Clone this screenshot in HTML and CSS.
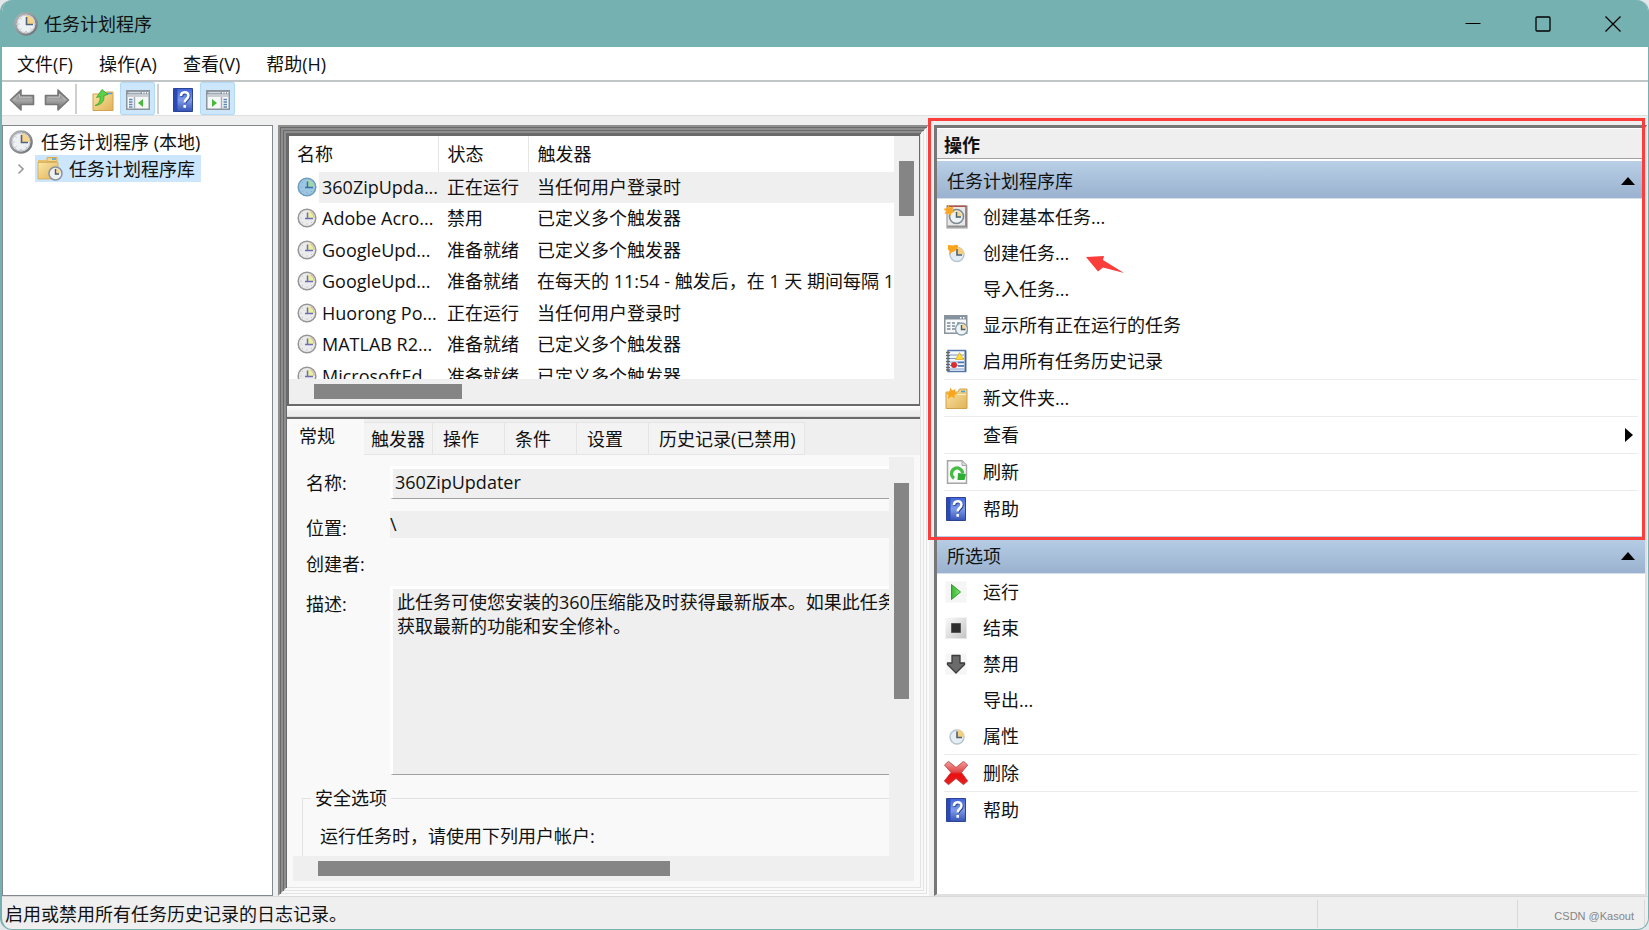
FILE: index.html
```html
<!DOCTYPE html>
<html lang="zh-CN">
<head>
<meta charset="utf-8">
<title>任务计划程序</title>
<link rel="stylesheet" href="styles.css">
</head>
<body>
<svg class="sprite" aria-hidden="true">
  <defs>
    <linearGradient id="g-ring" x1="0" y1="0" x2="1" y2="1"><stop offset="0" stop-color="#b5b7ba"/><stop offset="1" stop-color="#6d7074"/></linearGradient>
    <linearGradient id="g-folder" x1="0" y1="0" x2="1" y2="1"><stop offset="0" stop-color="#fbe6a6"/><stop offset="1" stop-color="#e0b257"/></linearGradient>
    <linearGradient id="g-book" x1="0" y1="0" x2="0" y2="1"><stop offset="0" stop-color="#3f63d8"/><stop offset=".5" stop-color="#7f9be8"/><stop offset="1" stop-color="#3553b4"/></linearGradient>
    <linearGradient id="g-arrow" x1="0" y1="0" x2="0" y2="1"><stop offset="0" stop-color="#6f6f6f"/><stop offset=".5" stop-color="#a8a8a8"/><stop offset="1" stop-color="#6a6a6a"/></linearGradient>
    <linearGradient id="g-red" x1="0" y1="0" x2="0" y2="1"><stop offset="0" stop-color="#f0a0a0"/><stop offset=".45" stop-color="#e04848"/><stop offset=".55" stop-color="#ea0f0f"/><stop offset="1" stop-color="#e62222"/></linearGradient>
    <linearGradient id="g-stop" x1="0" y1="0" x2="1" y2="1"><stop offset="0" stop-color="#fafafa"/><stop offset="1" stop-color="#c4c4c4"/></linearGradient>
    <linearGradient id="g-play" x1="0" y1="0" x2="1" y2="0"><stop offset="0" stop-color="#35b52c"/><stop offset="1" stop-color="#8be27c"/></linearGradient>
  </defs>
  <symbol id="clock" viewBox="0 0 24 24">
    <circle cx="12" cy="12" r="10.6" fill="#e9ecef" stroke="url(#g-ring)" stroke-width="2.4"/>
    <circle cx="12" cy="12" r="8.8" fill="#eef1f4" stroke="#c6cacf" stroke-width="1"/>
    <path d="M12 12V3.6A8.4 8.4 0 0 1 20.4 12Z" fill="#f8d48a"/>
    <path d="M12.5 5v7.5H19" fill="none" stroke="#50637c" stroke-width="1.6"/>
    <path d="M4.5 12h1M12 19v1M6.6 6.6l.7.7M6.6 17.4l.7-.7M17.4 17.4l-.7-.7" stroke="#9ba3ad" stroke-width="1"/>
  </symbol>
  <symbol id="clock-small" viewBox="0 0 20 20">
    <circle cx="10" cy="10" r="8.8" fill="#ebebee" stroke="#959595" stroke-width="1.5"/>
    <path d="M10 10V3a7 7 0 0 1 7 7Z" fill="#e5f2a2"/>
    <path d="M13.5 3.8A7 7 0 0 1 17 10" fill="none" stroke="#e8b9a2" stroke-width="1.3"/>
    <path d="M10.5 4.5v6H16M8 10.5h2" fill="none" stroke="#6f6cb0" stroke-width="1.5"/>
    <path d="M3.5 10h1M10 15.5v1M5.3 5.3l.7.7M5.3 14.7l.7-.7M14.7 14.7l-.7-.7" stroke="#b3b3bd"/>
  </symbol>
  <symbol id="clock-active" viewBox="0 0 20 20">
    <circle cx="10" cy="10" r="8.8" fill="#9dc6e2" stroke="#6f9dbd" stroke-width="1.5"/>
    <path d="M10 10V3a7 7 0 0 1 7 7Z" fill="#a0d9a8"/>
    <path d="M10.5 4.5v6H16M8 10.5h2" fill="none" stroke="#356fa5" stroke-width="1.5"/>
    <path d="M3.5 10h1M10 15.5v1M5.3 5.3l.7.7M5.3 14.7l.7-.7M14.7 14.7l-.7-.7" stroke="#6fa3c6"/>
  </symbol>
  <symbol id="clock-flat" viewBox="0 0 24 24">
    <circle cx="13" cy="13" r="7" fill="#e6eef3" stroke="#b3c4cf" stroke-width="1.4"/>
    <path d="M13 13V5.5a7.5 7.5 0 0 1 7.5 7.5Z" fill="#f3cf82"/>
    <path d="M13 7.5V13.5h5" fill="none" stroke="#4f6070" stroke-width="1.6"/>
  </symbol>
  <symbol id="folder-clock" viewBox="0 0 26 26">
    <path d="M1 4h8l2 3V22H1Z" fill="#e8be67"/>
    <path d="M10 1.500h10v4H10z" fill="#f3d58c" stroke="#d9ad56"/><path d="M15 3h4" stroke="#4aa0e8" stroke-width="1.6"/>
    <path d="M1 6.500h20V23H1Z" fill="url(#g-folder)" stroke="#d6a951" stroke-width=".8"/>
    <circle cx="18.500" cy="17.500" r="6.500" fill="#eef1f3" stroke="#8b949c" stroke-width="1.500"/>
    <path d="M18.500 17.500v-5a5 5 0 0 1 5 5Z" fill="#f6d68f"/>
    <path d="M18.500 13v5H22" fill="none" stroke="#46586a" stroke-width="1.400"/>
  </symbol>
  <symbol id="folder-up" viewBox="0 0 24 24">
    <path d="M2 6h11l1.500-2H22V22.500H2Z" fill="url(#g-folder)" stroke="#cfa24b"/>
    <path d="M16 5.500h5" stroke="#4aa0e8" stroke-width="1.600"/>
    <path d="M4 17.500C8.500 16 9.500 12.500 9 8.500L5.500 9.500 11 1.500 17 6.500 13 7.500C13.500 13 10.500 17 4 17.500Z" fill="#5bd04a" stroke="#33a528" stroke-width=".8"/>
  </symbol>
  <symbol id="folder-new" viewBox="0 0 24 24">
    <path d="M2 6h12l1.500-3H23v19.500H2Z" fill="url(#g-folder)" stroke="#cfa24b"/>
    <path d="M3 8.500h19" stroke="#fdf0c4"/><path d="M17 5.500h4" stroke="#4aa0e8" stroke-width="1.600"/>
    <path d="M6.500 1.500l1.500 3 3.500-1.500-.5 3.500 3 1.500-3.500 1 0 3.500-3-2-3.500 2.500.5-4-3-1.500 3.500-1Z" fill="#fba51c"/>
  </symbol>
  <symbol id="panel-left" viewBox="0 0 24 20">
    <path d="M.75.75h22.500v18.500H.75z" fill="#f6f7f8" stroke="#8c949b" stroke-width="1.500"/>
    <path d="M1 1h22v3.500H1z" fill="#909ba5"/><path d="M2.500 2.700h12" stroke="#e5e9ec"/><path d="M16 2.700h1.500M18.500 2.700H20M21 2.700h1.500" stroke="#fff" stroke-width="1.500"/>
    <path d="M1.500 6h21" stroke="#b9c0c6" stroke-width="1.500"/><path d="M8.500 7v12" stroke="#a5adb4" stroke-width="1.400"/>
    <path d="M3 9.500h3.500M3 12h3.500M3 14.500h3.500M3 17h3.500" stroke="#5c86b5" stroke-width="1.300"/>
    <path d="M17 9v8l-5-4Z" fill="#48b93b"/>
  </symbol>
  <symbol id="panel-right" viewBox="0 0 24 20">
    <path d="M.75.75h22.500v18.500H.75z" fill="#f6f7f8" stroke="#8c949b" stroke-width="1.500"/>
    <path d="M1 1h22v3.500H1z" fill="#909ba5"/><path d="M2.500 2.700h12" stroke="#e5e9ec"/><path d="M16 2.700h1.500M18.500 2.700H20M21 2.700h1.500" stroke="#fff" stroke-width="1.500"/>
    <path d="M1.500 6h21" stroke="#b9c0c6" stroke-width="1.500"/><path d="M15.500 7v12" stroke="#a5adb4" stroke-width="1.400"/>
    <path d="M17.500 9.500H21M17.500 12H21M17.500 14.500H21M17.500 17H21" stroke="#5c86b5" stroke-width="1.300"/>
    <path d="M6 9v8l5-4Z" fill="#48b93b"/>
  </symbol>
  <symbol id="help" viewBox="0 0 20 24">
    <path d="M.5.5h19v23H.5z" fill="url(#g-book)" stroke="#2c4493"/>
    <path d="M1 1h3.500v22H1z" fill="#2a49b4"/>
    <path d="M8 8c0-5 7.500-5 7.500-.5 0 3.500-3.800 3.500-3.800 7" fill="none" stroke="#26418f" stroke-width="2.600" transform="translate(.8 .8)"/>
    <path d="M8 8c0-5 7.500-5 7.500-.5 0 3.500-3.800 3.500-3.800 7M11.700 17v2.800" fill="none" stroke="#fff" stroke-width="2.500"/>
  </symbol>
  <symbol id="back" viewBox="0 0 26 24">
    <path d="M1.500 12L12 2v5.500H24.500v9H12V22Z" fill="url(#g-arrow)" stroke="#777" stroke-width="1.600" stroke-linejoin="round"/>
    <path d="M4.500 12L10.500 6v3.200h12" fill="none" stroke="#c4c4c4"/>
  </symbol>
  <symbol id="task-basic" viewBox="0 0 24 24">
    <path d="M3 1h20v22H3z" fill="#e8e8e8" stroke="#9a9a9a" stroke-width="1.200"/>
    <path d="M3 .500h19.500v1.500H3z" fill="#ad5148"/><path d="M22 2v20" stroke="#8a7370" stroke-width="1.600"/>
    <path d="M3.500 21.500h18" stroke="#8f8f8f" stroke-width="2"/>
    <circle cx="12.500" cy="11.500" r="7" fill="#f0f3f5" stroke="#7d8990" stroke-width="1.600"/>
    <path d="M12.500 11.500V6a5.500 5.500 0 0 1 5.500 5.500Z" fill="#f4d792"/>
    <path d="M12.500 7v5H17" fill="none" stroke="#47606e" stroke-width="1.500"/>
    <path d="M4.500 0l1.500 2.500 3.500-1L8.500 5 11 7 7.500 8 6.500 11 4 8.500.5 9 2 6-.5 4 3 3Z" fill="#f9a72a"/>
  </symbol>
  <symbol id="task-new" viewBox="0 0 24 24">
    <circle cx="13" cy="13.500" r="7" fill="#e3ecf2" stroke="#b3c4cf" stroke-width="1.400"/>
    <path d="M13 13V6a7.500 7.500 0 0 1 7.500 7.500Z" fill="#f3cf82"/>
    <path d="M13 8v6h5" fill="none" stroke="#4f6070" stroke-width="1.600"/>
    <path d="M4 4l5 .5 3-.8 2.500 1-1.500 2.800-2 2.500-3.500 1.500L5 14l.5-4L4 8.500Z" fill="#faa41c"/>
  </symbol>
  <symbol id="task-running" viewBox="0 0 24 24">
    <path d="M.75 2.750h22v17.500h-22z" fill="#f7f8f9" stroke="#8c949b" stroke-width="1.500"/>
    <path d="M1 3h21.500v3.500H1z" fill="#8792a0"/><path d="M16 4.700h1.500M19 4.700h1.500" stroke="#fff" stroke-width="1.500"/>
    <path d="M3 10h3.500M8 10h3M13 10h3M3 13h3.500M8 13h3M3 16h3.500M8 16h3" stroke="#7d8a97" stroke-width="1.400"/>
    <circle cx="17.500" cy="16" r="6" fill="#eef3f6" stroke="#8ba0ad" stroke-width="1.400"/>
    <path d="M17.500 16v-5a5 5 0 0 1 5 5Z" fill="#f4d792"/>
    <path d="M17.500 12v4.500h4" fill="none" stroke="#47606e" stroke-width="1.400"/>
  </symbol>
  <symbol id="history" viewBox="0 0 24 24">
    <path d="M4 1.500h17.500v21H4z" fill="#f4f7fb" stroke="#5578ae" stroke-width="1.500"/><path d="M21.500 2v20.500" stroke="#4a6494" stroke-width="1.600"/>
    <path d="M6 6h14M6 9.500h14M6 13h14M6 16.500h14M6 20h14" stroke="#7e9cc9"/>
    <path d="M2 3.500h4M2 6.500h4M2 9.500h4M2 12.500h4M2 15.500h4M2 18.500h4M2 21h4" stroke="#666" stroke-width="1.300"/>
    <path d="M15.500 3.500l4 7h-8Z" fill="#ffd83a" stroke="#d9a910" stroke-width=".7"/>
    <circle cx="10" cy="16" r="3" fill="#db2b2b"/><path d="M14 13.500h6M14 17h6" stroke="#4c74b0" stroke-width="1.300"/>
  </symbol>
  <symbol id="refresh" viewBox="0 0 24 24">
    <path d="M3.500.75H18l4.500 4.500v18h-19z" fill="#fafafa" stroke="#a6a6a6" stroke-width="1.500"/><path d="M18 1v4.500h4.500" fill="#ddd" stroke="#a6a6a6"/>
    <path d="M10 18.300A5.600 5.600 0 1 1 18.700 13.500" fill="none" stroke="#45bd45" stroke-width="3.200"/>
    <path d="M14 13L22 14 20.500 20H13.500Z" fill="#2fae36"/>
  </symbol>
  <symbol id="run" viewBox="0 0 24 24"><path d="M1.500 1.500h21v21h-21z" fill="#f5f5f5"/><path d="M7.500 4.500L16.500 12 7.500 19.500Z" fill="url(#g-play)" stroke="#2ba024" stroke-linejoin="round"/></symbol>
  <symbol id="stop" viewBox="0 0 24 24"><path d="M1.500 1.500h21v21h-21z" fill="url(#g-stop)"/><path d="M7.500 7.500h9v9h-9z" fill="#2d2d2d" stroke="#555"/></symbol>
  <symbol id="disable" viewBox="0 0 24 24"><path d="M1.500 1.500h21v21h-21z" fill="#f5f5f5"/><path d="M8 3.500h8V11h4.500v1.500L12 21 3.500 12.500V11H8Z" fill="#6b6b6b" stroke="#3b3b3b" stroke-width="1.300" stroke-linejoin="round"/></symbol>
  <symbol id="delete" viewBox="0 0 24 24">
    <path d="M.5 4L4.500.3 12 6.500 19.500.3 23.700 4 17.500 11.500 23.700 20 19.500 23.700 12 17.500 4.500 23.700.3 20 7 11.500Z" fill="url(#g-red)" stroke="#b83a3a" stroke-width=".8" stroke-linejoin="round"/>
  </symbol>
</svg>

<div class="window">
  <header class="titlebar">
    <svg class="icon-24"><use href="#clock"/></svg>
    <h1>任务计划程序</h1>
    <div class="window-controls">
      <button type="button" aria-label="最小化"><svg viewBox="0 0 16 16"><path d="M.5 7.500h15" stroke="#000"/></svg></button>
      <button type="button" aria-label="最大化"><svg viewBox="0 0 16 16"><rect x="1" y="1" width="14" height="14" rx="1" fill="none" stroke="#000" stroke-width="1.300"/></svg></button>
      <button type="button" aria-label="关闭"><svg viewBox="0 0 16 16"><path d="M.5.5l15 15M15.500.5l-15 15" stroke="#000" stroke-width="1.300"/></svg></button>
    </div>
  </header>

  <nav class="menubar">
    <button type="button">文件(F)</button>
    <button type="button">操作(A)</button>
    <button type="button">查看(V)</button>
    <button type="button">帮助(H)</button>
  </nav>

  <div class="toolbar">
    <button type="button" aria-label="后退"><svg class="arrow-icon"><use href="#back"/></svg></button>
    <button type="button" aria-label="前进"><svg class="arrow-icon flip"><use href="#back"/></svg></button>
    <span class="divider wide"></span>
    <button type="button" aria-label="上一级"><svg class="icon-24"><use href="#folder-up"/></svg></button>
    <button type="button" class="pressed" aria-label="显示控制台树"><svg class="panel-icon"><use href="#panel-left"/></svg></button>
    <span class="divider"></span>
    <button type="button" aria-label="帮助"><svg class="book-icon"><use href="#help"/></svg></button>
    <button type="button" class="pressed" aria-label="显示操作窗格"><svg class="panel-icon"><use href="#panel-right"/></svg></button>
  </div>

  <main class="body">
    <aside class="tree">
      <div class="tree-root"><svg class="icon-24"><use href="#clock"/></svg><span>任务计划程序 (本地)</span></div>
      <div class="tree-child">
        <button type="button" class="expander" aria-label="展开"><svg viewBox="0 0 8 12"><path d="M1.500 1.500L6 6l-4.500 4.500" fill="none" stroke="#999" stroke-width="1.600"/></svg></button>
        <button type="button" class="tree-node"><svg class="icon-26"><use href="#folder-clock"/></svg>任务计划程序库</button>
      </div>
    </aside>

    <div class="bevel"><div class="bevel"><div class="bevel center">
      <section class="list-pane">
        <div class="list-view">
          <table>
            <colgroup><col class="c-icon"><col class="c-name"><col class="c-state"><col></colgroup>
            <thead><tr><th colspan="2" scope="col">名称</th><th scope="col">状态</th><th scope="col">触发器</th></tr></thead>
            <tbody>
              <tr class="selected"><td><svg class="icon-20"><use href="#clock-active"/></svg></td><td>360ZipUpda...</td><td>正在运行</td><td>当任何用户登录时</td></tr>
              <tr><td><svg class="icon-20"><use href="#clock-small"/></svg></td><td>Adobe Acro...</td><td>禁用</td><td>已定义多个触发器</td></tr>
              <tr><td><svg class="icon-20"><use href="#clock-small"/></svg></td><td>GoogleUpd...</td><td>准备就绪</td><td>已定义多个触发器</td></tr>
              <tr><td><svg class="icon-20"><use href="#clock-small"/></svg></td><td>GoogleUpd...</td><td>准备就绪</td><td>在每天的 11:54 - 触发后，在 1 天 期间每隔 1</td></tr>
              <tr><td><svg class="icon-20"><use href="#clock-small"/></svg></td><td>Huorong Po...</td><td>正在运行</td><td>当任何用户登录时</td></tr>
              <tr><td><svg class="icon-20"><use href="#clock-small"/></svg></td><td>MATLAB R2...</td><td>准备就绪</td><td>已定义多个触发器</td></tr>
              <tr><td><svg class="icon-20"><use href="#clock-small"/></svg></td><td>MicrosoftEd...</td><td>准备就绪</td><td>已定义多个触发器</td></tr>
            </tbody>
          </table>
        </div>
        <div class="scroll-v list-v"><div class="thumb"></div></div>
        <div class="scroll-h list-h"><div class="thumb"></div></div>
      </section>

      <div class="splitter"></div>

      <section class="details">
        <div class="tabs" role="tablist">
          <button type="button" role="tab" aria-selected="true" class="active">常规</button>
          <button type="button" role="tab" class="tab-wide">触发器</button>
          <button type="button" role="tab">操作</button>
          <button type="button" role="tab">条件</button>
          <button type="button" role="tab">设置</button>
          <button type="button" role="tab" class="tab-last">历史记录(已禁用)</button>
        </div>
        <div class="page">
          <form class="viewport">
            <div class="fields">
              <label for="f-name">名称:</label>
              <input id="f-name" class="boxed" type="text" value="360ZipUpdater" readonly>
              <label for="f-loc" class="low">位置:</label>
              <input id="f-loc" type="text" value="\" readonly>
              <span class="low">创建者:</span>
              <span></span>
              <label for="f-desc" class="high">描述:</label>
              <textarea id="f-desc" class="boxed" wrap="off" readonly>此任务可使您安装的360压缩能及时获得最新版本。如果此任务
获取最新的功能和安全修补。</textarea>
            </div>
            <fieldset>
              <legend>安全选项</legend>
              <p>运行任务时，请使用下列用户帐户:</p>
            </fieldset>
          </form>
          <div class="scroll-v page-v"><div class="thumb"></div></div>
          <div class="scroll-h page-h"><div class="thumb"></div></div>
        </div>
      </section>
    </div></div></div>

    <aside class="actions">
      <div class="marked">
        <h2>操作</h2>
        <button type="button" class="group">任务计划程序库<svg viewBox="0 0 14 8"><path d="M7 0l7 8H0Z"/></svg></button>
        <ul>
          <li><button type="button"><svg class="icon-24"><use href="#task-basic"/></svg>创建基本任务...</button></li>
          <li><button type="button"><svg class="icon-24"><use href="#task-new"/></svg>创建任务...<svg class="pointer" viewBox="0 0 38 18"><path d="M0 1L18 0 17 4 38 17 17 11.500 12 15.500Z" fill="#fb3e3c"/></svg></button></li>
          <li><button type="button"><span class="icon-24"></span>导入任务...</button></li>
          <li><button type="button"><svg class="icon-24"><use href="#task-running"/></svg>显示所有正在运行的任务</button></li>
          <li><button type="button"><svg class="icon-24"><use href="#history"/></svg>启用所有任务历史记录</button></li>
          <li class="ruled"><button type="button"><svg class="icon-24"><use href="#folder-new"/></svg>新文件夹...</button></li>
          <li class="ruled"><button type="button"><span class="icon-24"></span>查看<svg class="submenu" viewBox="0 0 8 14"><path d="M0 0l8 7-8 7Z"/></svg></button></li>
          <li class="ruled"><button type="button"><svg class="icon-24"><use href="#refresh"/></svg>刷新</button></li>
          <li class="ruled"><button type="button"><svg class="icon-24"><use href="#help"/></svg>帮助</button></li>
        </ul>
      </div>
      <button type="button" class="group">所选项<svg viewBox="0 0 14 8"><path d="M7 0l7 8H0Z"/></svg></button>
      <ul>
        <li><button type="button"><svg class="icon-24"><use href="#run"/></svg>运行</button></li>
        <li><button type="button"><svg class="icon-24"><use href="#stop"/></svg>结束</button></li>
        <li><button type="button"><svg class="icon-24"><use href="#disable"/></svg>禁用</button></li>
        <li><button type="button"><span class="icon-24"></span>导出...</button></li>
        <li><button type="button"><svg class="icon-24"><use href="#clock-flat"/></svg>属性</button></li>
        <li class="ruled"><button type="button"><svg class="icon-24"><use href="#delete"/></svg>删除</button></li>
        <li class="ruled"><button type="button"><svg class="icon-24"><use href="#help"/></svg>帮助</button></li>
      </ul>
    </aside>
  </main>

  <footer class="statusbar">
    <span class="message">启用或禁用所有任务历史记录的日志记录。</span>
    <span class="cell"></span>
    <span class="cell credit">CSDN @Kasout</span>
  </footer>
</div>
</body>
</html>
```
FILE: styles.css
```css
* { box-sizing: border-box; }

html, body { height: 100%; margin: 0; }

body {
  background: #e4e7e9;
  color: #111;
  font: 18px/24px "Open Sans", "Noto Sans CJK SC", sans-serif;
}

button, input, textarea {
  margin: 0;
  padding: 0;
  border: 0;
  background: none;
  color: inherit;
  font: inherit;
  text-align: left;
}

svg { display: block; flex: none; }
.sprite { position: absolute; width: 0; height: 0; }
.icon-20 { width: 20px; height: 20px; }
.icon-24 { width: 24px; height: 24px; flex: none; }
.icon-26 { width: 26px; height: 26px; }

.window {
  display: flex;
  flex-direction: column;
  height: 100vh;
  overflow: hidden;
  border: solid #76b1b1;
  border-width: 0 1px 1px 2px;
  border-radius: 12px;
  background: #efefef;
}

/* Title bar */
.titlebar {
  display: flex;
  align-items: center;
  height: 47px;
  flex: none;
  gap: 6px;
  padding-left: 12px;
  background: #76b1b1;
}
.titlebar h1 { margin: 0; font-size: 18px; font-weight: 400; }
.window-controls { display: flex; margin-left: auto; }
.window-controls button { display: grid; place-items: center; width: 70px; height: 47px; }
.window-controls svg { width: 16px; height: 16px; }

/* Menu and toolbar */
.menubar {
  display: flex;
  height: 35px;
  flex: none;
  padding-left: 2px;
  border-bottom: 2px solid #c2c5c5;
  background: #fff;
}
.menubar button { padding: 0 13px; }
.toolbar {
  display: flex;
  align-items: center;
  height: 34px;
  flex: none;
  padding-left: 2px;
  border-bottom: 1px solid #e0e0e0;
  background: #fff;
}
.toolbar button { display: grid; place-items: center; width: 35px; height: 33px; padding-top: 2px; }
.toolbar .pressed { border: 1px solid #b2daf7; border-radius: 2px; background: #cce6fb; }
.divider { width: 2px; height: 30px; margin: 0 6px 0 2px; background: #cfcfcf; }
.divider.wide { margin: 0 8px 0 1px; }
.arrow-icon { width: 26px; height: 24px; }
.flip { transform: scaleX(-1); }
.panel-icon { width: 24px; height: 20px; }
.book-icon { width: 20px; height: 24px; }

/* Three-pane body */
.body {
  display: grid;
  grid-template-columns: 271px 651px minmax(0, 1fr);
  gap: 5px;
  flex: 1;
  min-height: 0;
  padding-top: 9px;
}

.tree { border: 1px solid #828790; padding: 3px 6px; background: #fff; }
.tree-root { display: flex; align-items: center; gap: 8px; height: 26px; }
.tree-child { display: flex; align-items: center; gap: 10px; padding-left: 8px; }
.expander { width: 8px; height: 27px; }
.expander svg { width: 8px; height: 12px; }
.tree-node { display: flex; align-items: center; gap: 6px; height: 27px; padding: 0 6px 0 2px; background: #cce6fe; }

.bevel {
  min-height: 0;
  height: 100%;
  border: 2px solid;
  border-color: #8e8e8e #fafafa #fafafa #8e8e8e;
  padding: 1px;
  box-shadow: inset 1px 1px #6a6a6a, inset -1px -1px #e3e3e3;
}
.center { display: grid; grid-template-rows: 272px 11px minmax(0, 1fr); }

/* Task list */
.list-pane {
  display: grid;
  grid-template: minmax(0, 1fr) 25px / minmax(0, 1fr) 25px;
  border: 2px solid #6a6a6a;
  border-right-width: 1px;
  background: #efefef;
}
.list-view { overflow: hidden; background: #fff; }
table { width: 100%; table-layout: fixed; border-collapse: collapse; }
.c-icon { width: 30px; }
.c-name { width: 119px; }
.c-state { width: 90px; }
th, td { overflow: hidden; padding: 0 0 0 9px; font-weight: 400; text-align: left; white-space: nowrap; }
th { height: 36px; border-right: 1px solid #e5e5e5; }
th:first-child, td:first-child { padding-left: 8px; }
th:last-child { border-right: 0; }
td { height: 31px; padding-bottom: 2px; }
tr:nth-child(even) td { height: 32px; }
td:nth-child(2) { padding-left: 3px; }
.selected td:not(:first-child) { background: #efefef; }

.scroll-v, .scroll-h { background: #efefef; }
.thumb { background: #858585; }
.scroll-v .thumb { width: 15px; }
.scroll-h .thumb { height: 15px; }
.list-v { padding: 25px 5px; }
.list-v .thumb { height: 55px; }
.list-h { grid-column: 1 / -1; padding: 5px 25px; }
.list-h .thumb { width: 148px; }

.splitter { border-bottom: 1px solid #dcdcdc; background: linear-gradient(#fff, #ededed 60%); }

/* Details */
.details { display: flex; flex-direction: column; min-height: 0; border-top: 2px solid #6a6a6a; background: #f9f9f9; }
.tabs { display: flex; align-items: flex-end; height: 36px; flex: none; background: #efefef; }
.tabs button {
  width: 72px;
  height: 33px;
  border: 1px solid #e5e5e5;
  border-left: 0;
  padding-left: 10px;
  background: #f3f3f3;
  white-space: nowrap;
}
.tabs .active { width: 77px; height: 36px; border: 0; padding: 0 0 3px 12px; background: #f9f9f9; }
.tabs .tab-wide { width: 69px; padding-left: 7px; }
.tabs .tab-last { width: 156px; }
.page {
  display: grid;
  grid-template: minmax(0, 1fr) 25px / minmax(0, 1fr) 25px;
  flex: 1;
  min-height: 0;
  padding: 2px 6px 6px;
}
.viewport { overflow: hidden; }
.fields {
  display: grid;
  grid-template-columns: 84px minmax(0, 1fr);
  grid-template-rows: 33px 27px 24px 189px;
  gap: 12px 0;
  padding: 9px 0 0 13px;
  line-height: 20px;
}
.fields > label { align-self: center; }
.fields > .low { align-self: end; }
.fields > .high { align-self: start; padding-top: 8px; }
.fields input, .fields textarea { width: 100%; height: 100%; border-radius: 0; background: #efefef; outline: 0; padding-bottom: 2px; }
.fields .boxed { border: 3px solid #fff; border-right: 0; border-bottom: 1px solid #a0a0a0; padding: 0 0 4px 2px; }
textarea { display: block; overflow: hidden; resize: none; line-height: 24px; }
.fields textarea.boxed { padding: 1px 0 0 4px; }
fieldset { height: 120px; min-width: 0; margin: 11px 0 0 9px; border: 1px solid #e2e2e2; border-right: 0; padding: 14px 17px; }
legend { margin-left: -9px; padding: 0 4px; }
fieldset p { margin: 0; }

.page-v { padding: 26px 5px; }
.page-v .thumb { height: 216px; }
.page-h { grid-column: 1 / -1; padding: 5px 25px; }
.page-h .thumb { width: 352px; }

/* Actions */
.actions {
  min-width: 0;
  margin-right: 1px;
  border: 3px solid #777;
  border-right: 2px solid #e0e0e0;
  border-bottom: 2px solid #e0e0e0;
  background: #fff;
}
.marked { position: relative; padding-bottom: 9px; }
.marked::after {
  content: "";
  position: absolute;
  inset: -10px 0 -4px -9px;
  border: 3px solid #fb3e3c;
  pointer-events: none;
}
h2 {
  height: 33px;
  margin: 0;
  border: solid #fff;
  border-width: 1px 0 2px;
  padding: 4px 7px;
  background: #efefef;
  box-shadow: inset 0 -1px #a0a0a0;
  font-size: 18px;
}
.group {
  display: flex;
  align-items: center;
  justify-content: space-between;
  width: 100%;
  height: 38px;
  padding: 2px 10px 0;
  border-bottom: 1px solid #d3e0ec;
  background: linear-gradient(#b9cfe7, #9ab2cf);
}
.group svg { width: 14px; height: 8px; }
.actions ul { list-style: none; margin: 0; padding: 0 7px; }
.actions li button { display: flex; align-items: center; width: 100%; height: 36px; }
.actions .ruled { border-top: 1px solid #ececec; }
.actions li .icon-24 { margin-right: 15px; }
.pointer { width: 38px; height: 18px; margin: 21px 0 0 17px; align-self: flex-start; }
.submenu { width: 8px; height: 14px; margin: 0 5px 0 auto; }

/* Status bar */
.statusbar { display: flex; height: 33px; flex: none; border-top: 1px solid #d9d9d9; padding: 3px 3px 1px; line-height: 28px; }
.message { flex: 1; }
.cell { width: 200px; border-left: 1px solid #dadada; }
.credit {
  width: 128px;
  border-right: 1px solid #dadada;
  padding: 4px 10px 0 0;
  color: #858585;
  font: 11px/24px "Liberation Sans", Arial, sans-serif;
  text-align: right;
}
```
